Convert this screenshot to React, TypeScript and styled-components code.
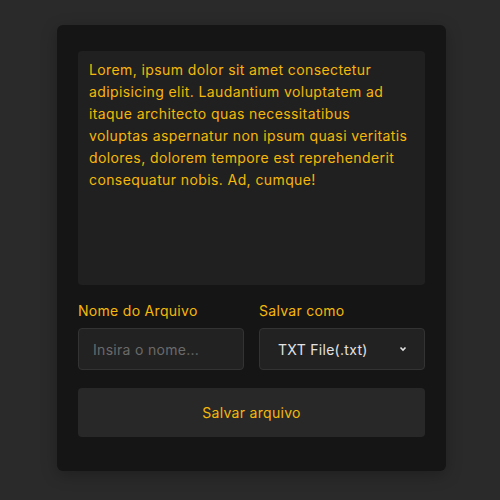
import React, { useState } from "react";
import styled, { createGlobalStyle } from "styled-components";

const GlobalStyle = createGlobalStyle`
  html, body {
    margin: 0;
    padding: 0;
    background: #2a2a2a;
    font-family: "Inter", "Noto Sans", sans-serif;
  }
`;

const Page = styled.div`
  display: flex;
  justify-content: center;
  align-items: flex-start;
  padding: 25px 0 0 3px;
  min-height: 500px;
  box-sizing: border-box;
`;

const Card = styled.div`
  width: 389px;
  box-sizing: border-box;
  background: #151515;
  border-radius: 6px;
  padding: 26px 21px 34px;
  display: flex;
  flex-direction: column;
  box-shadow: 0 4px 16px rgba(0, 0, 0, 0.25);
`;

const TextArea = styled.textarea`
  height: 234px;
  box-sizing: border-box;
  resize: none;
  background: #202020;
  border: none;
  border-radius: 4px;
  padding: 8px 16px 8px 11px;
  color: #f5b80a;
  font-family: inherit;
  font-size: 14px;
  letter-spacing: 0.4px;
  line-height: 22px;
  outline: none;
`;

const Fields = styled.div`
  display: grid;
  grid-template-columns: minmax(0, 1fr) minmax(0, 1fr);
  gap: 15px;
  margin-top: 17px;
`;

const Field = styled.label`
  display: flex;
  flex-direction: column;
  gap: 8px;
  min-width: 0;
`;

const Label = styled.span`
  color: #f5b80a;
  font-size: 14px;
  letter-spacing: 0.3px;
  line-height: 18px;
`;

const Input = styled.input`
  width: 100%;
  height: 42px;
  box-sizing: border-box;
  background: #222222;
  border: 1px solid #333333;
  border-radius: 4px;
  padding: 0 14px;
  color: #dddddd;
  font-family: inherit;
  font-size: 14px;
  letter-spacing: 0.3px;
  outline: none;

  &::placeholder {
    color: #6a6a6a;
  }
`;

const Select = styled.div`
  height: 42px;
  box-sizing: border-box;
  background: #222222;
  border: 1px solid #333333;
  border-radius: 4px;
  padding: 0 16px 0 18px;
  display: flex;
  align-items: center;
  justify-content: space-between;
  color: #e2e2e2;
  font-size: 14px;
  letter-spacing: 0.3px;
  white-space: nowrap;
`;

const Button = styled.button`
  margin-top: 18px;
  height: 49px;
  border: none;
  border-radius: 4px;
  background: #282828;
  color: #f5b80a;
  font-family: inherit;
  font-size: 14px;
  letter-spacing: 0.3px;
  cursor: pointer;
`;

const text =
  "Lorem, ipsum dolor sit amet consectetur adipisicing elit. Laudantium voluptatem ad itaque architecto quas necessitatibus voluptas aspernatur non ipsum quasi veritatis dolores, dolorem tempore est reprehenderit consequatur nobis. Ad, cumque!";

export default function App() {
  const [value, setValue] = useState(text);
  return (
    <>
      <GlobalStyle />
      <Page>
        <Card>
          <TextArea value={value} onChange={(e) => setValue(e.target.value)} />
          <Fields>
            <Field>
              <Label>Nome do Arquivo</Label>
              <Input placeholder="Insira o nome..." />
            </Field>
            <Field>
              <Label>Salvar como</Label>
              <Select>
                <span>TXT File(.txt)</span>
                <svg width="10" height="10" viewBox="0 0 10 10">
                  <path d="M2.5 3.5 L5 6 L7.5 3.5" stroke="#e2e2e2" strokeWidth="1.6" fill="none" />
                </svg>
              </Select>
            </Field>
          </Fields>
          <Button>Salvar arquivo</Button>
        </Card>
      </Page>
    </>
  );
}
